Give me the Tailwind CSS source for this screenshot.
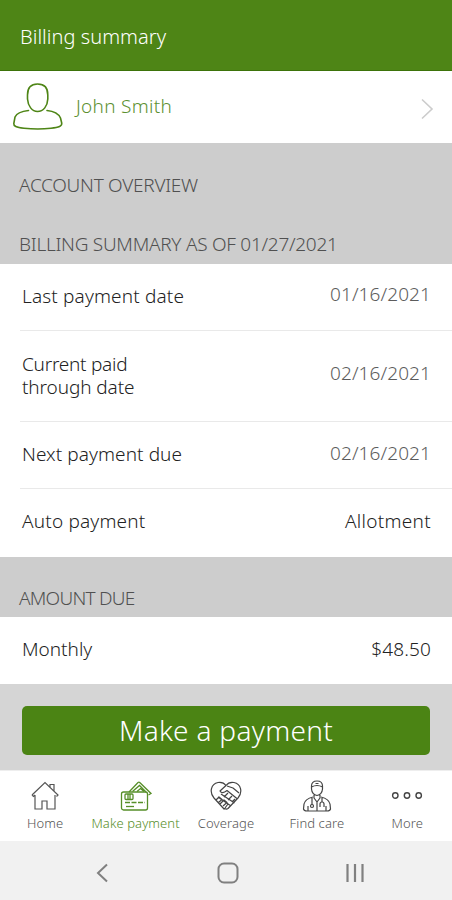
<!DOCTYPE html>
<html lang="en">
<head>
<meta charset="utf-8">
<title>Billing summary</title>
<script src="https://cdn.jsdelivr.net/npm/@tailwindcss/browser@4"></script>
</head>
<body class="w-[452px] h-[900px] overflow-hidden bg-white font-['Noto_Sans',sans-serif] font-light text-[19px] text-[#333] whitespace-nowrap">
<div class="flex flex-col h-[900px]">
  <header class="h-[71px] shrink-0 bg-[#4e8516] border-b border-[#3d730a] flex items-center pl-5 pt-1">
    <h1 class="text-[20px] leading-7 text-white tracking-[0.05px]">Billing summary</h1>
  </header>
  <section class="h-[72px] shrink-0 flex items-center pl-[12px] pr-[18px]">
    <svg class="w-[52px] h-[48px] mb-px" viewBox="0 0 52 48" fill="none" stroke="#4e8516" stroke-width="1.6" stroke-linecap="round"><path d="M25.500 1C18 1 15.500 5 15.500 12V16C16 23 20 28.500 25.500 28.500C31.500 28.500 35.500 23 35.800 16V12C35.800 5 33 1 25.500 1ZM16.500 27.500C12 28 5 29.500 3 34L1.800 40.500C1.500 43 4 44.500 12 45.200Q26 46.800 39 45.200C47 44.500 50.300 43 49.700 40L48.500 35C46 29.500 40 28 35 27.500"/></svg>
    <span class="ml-3 mb-[2px] text-[#5c9030] tracking-[0.3px]">John Smith</span>
    <svg class="ml-auto mt-[4px] w-[14px] h-[22px]" viewBox="0 0 14 22" fill="none" stroke="#ccc" stroke-width="1.600"><path d="M2 1.500L12 11L2 20.500"/></svg>
  </section>
  <section class="h-[121px] shrink-0 bg-[#cdcdcd] pl-[19px] text-[#505050] leading-6 pt-[30px] tracking-[-0.27px]">
    <h2>ACCOUNT OVERVIEW</h2>
    <h2 class="mt-[35px]">BILLING SUMMARY AS OF 01/27/2021</h2>
  </section>
  <section class="h-[293px] shrink-0 pl-5 text-[#222]">
    <div class="h-[67px] border-b border-[#e9e9e9] flex items-center justify-between pl-[2px] pr-[21px] pb-px"><span class="tracking-[0.15px]">Last payment date</span><span class="text-[#5c5c5c] mb-[4px] tracking-[0.1px]">01/16/2021</span></div>
    <div class="h-[91px] border-b border-[#e9e9e9] flex items-center justify-between pl-[2px] pr-[21px]"><span class="leading-[23px]"><span class="tracking-[-0.25px]">Current paid</span><br><span class="tracking-[-0.1px]">through date</span></span><span class="text-[#5c5c5c] mb-[6px] tracking-[0.1px]">02/16/2021</span></div>
    <div class="h-[67px] border-b border-[#e9e9e9] flex items-center justify-between pl-[2px] pr-[21px] pb-[2px]"><span class="tracking-[0.08px]">Next payment due</span><span class="text-[#5c5c5c] mb-[2px] tracking-[0.1px]">02/16/2021</span></div>
    <div class="h-[67px] flex items-center justify-between pl-[2px] pr-[21px] pb-[2px]"><span class="tracking-[0.18px]">Auto payment</span><span class="tracking-[0.3px]">Allotment</span></div>
  </section>
  <section class="h-[60px] shrink-0 bg-[#cdcdcd] pl-[19px] pt-[29px] leading-6 text-[#505050] tracking-[-0.75px]"><h2>AMOUNT DUE</h2></section>
  <section class="h-[67px] shrink-0 flex items-center justify-between pl-[22px] pr-[21px] pb-[2px] text-[#222]"><span>Monthly</span><span class="tracking-[0.15px]">$48.50</span></section>
  <section class="h-[86px] shrink-0 bg-[#d5d5d5] px-[22px] pt-[22px]">
    <button class="w-full h-[49px] rounded-[5px] bg-[#4b8414] text-white text-[28px] leading-[46px] pb-[2px] tracking-[0.3px]">Make a payment</button>
  </section>
  <nav class="h-[71px] shrink-0 border-t border-[#eee] grid grid-cols-5 text-[13px] text-[#555] leading-4 text-center tracking-[0.1px]">
    <div class="flex flex-col items-center pt-[10px]">
      <svg class="w-[30px] h-[30px] mb-[4px]" viewBox="0 0 30 30" fill="none" stroke="#555" stroke-width="1.200"><path d="M5 14V28H12V20H17V28H25V14M2 14L15 1.500L28 14L26.500 15.500M2 14L3.500 15.500L5 14M20 6V3.500H24V10"/></svg>
      <span>Home</span>
    </div>
    <div class="flex flex-col items-center pt-[10px] text-[#568e28]">
      <svg class="w-[34px] h-[30px] mb-[4px]" viewBox="0 0 34 30" fill="none" stroke="currentColor" stroke-width="1.300"><rect x="2.500" y="11" width="26" height="18" rx="2"/><path d="M10 11L19 1.500Q20 .800 21 1.700L32 12.500L29.500 14M13.500 10.500L20.500 4.500L27 11M18 10.500L21.500 7.500L25 10.500"/><path d="M6 21.500H26" stroke-dasharray="5 1.500"/><path d="M7 25.500H15"/><rect x="6" y="13" width="8" height="5.500" rx="1"/><path d="M9 13V18.500M11 13V18.500"/></svg>
      <span>Make payment</span>
    </div>
    <div class="flex flex-col items-center pt-[10px]">
      <svg class="w-[32px] h-[30px] mb-[4px]" viewBox="0 0 32 30" fill="none" stroke="#444" stroke-width="1.200" stroke-linejoin="round"><path d="M14.500 28.500L4 17C-1 11 1 3 8 1.500Q13 .500 16 4.500Q19 .500 24 1.500C31 3 33 11 28 17L18 27.500Q16 29 14.500 27M16 4.500L10 10Q12 13.500 17 9.500L27.500 18M17 5L23 7L29 12M11 13L24.500 22M8 16L21 25M6 19L9 16L12 18.500L8.500 21.500M10 23L14 19L17 21.500L13 25M15 27L18 23M14 16L18 12M18 19L22 15M22 21L25 18"/></svg>
      <span>Coverage</span>
    </div>
    <div class="flex flex-col items-center pt-[9px] pl-px">
      <svg class="w-[30px] h-[32px] mb-[3px]" viewBox="0 0 30 32" fill="none" stroke="#444" stroke-width="1.200" stroke-linejoin="round"><path d="M9.500 6Q9.500 1 15 1Q20.500 1 20.500 6V9Q20 14.500 15 15.500Q10 14.500 9.500 9ZM9.500 7Q15 4 20.500 7M13.500 3.500H16.500M12 15V18L15 22L18 18V15M11 17Q3 19 2 24L1.500 29Q2 31 5 31H25Q28 31 28.500 29L28 24Q27 19 19 17M6 31V26M24 31V26M10 18V25M20 18V22M15 22V31"/><circle cx="10" cy="26" r="1.500"/><path d="M18 27V24Q18 22 20 22T22 24V27"/></svg>
      <span>Find care</span>
    </div>
    <div class="flex flex-col items-center pt-[10px] pl-px">
      <svg class="w-[32px] h-[30px] mb-[4px]" viewBox="0 0 32 30" fill="none" stroke="#444" stroke-width="1.400"><circle cx="4.300" cy="14.500" r="2.700"/><circle cx="16" cy="14.500" r="2.700"/><circle cx="27.700" cy="14.500" r="2.700"/></svg>
      <span>More</span>
    </div>
  </nav>
  <footer class="h-[59px] shrink-0 bg-[#f1f1f1] flex items-center justify-between pl-[95px] pr-[87px] pt-1">
    <svg class="w-[14px] h-[20px]" viewBox="0 0 14 20" fill="none" stroke="#808080" stroke-width="2"><path d="M12 1.500L3 10L12 18.500"/></svg>
    <svg class="w-[22px] h-[22px] ml-[2px]" viewBox="0 0 22 22" fill="none" stroke="#808080" stroke-width="2"><rect x="1.500" y="1.500" width="19" height="19" rx="5.500"/></svg>
    <svg class="w-[20px] h-[20px]" viewBox="0 0 20 20" fill="none" stroke="#808080" stroke-width="2.200"><path d="M2.500 1V19M10 1V19M17.500 1V19"/></svg>
  </footer>
</div>
</body>
</html>
